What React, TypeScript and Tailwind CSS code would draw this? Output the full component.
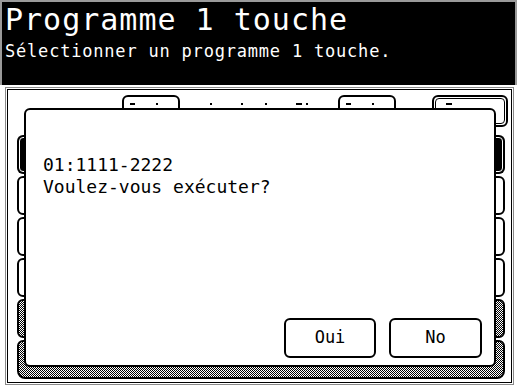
const mono = { fontFamily: '"DejaVu Sans Mono", "Liberation Mono", monospace' };

const hatch =
  "bg-[repeating-conic-gradient(#000_0%_25%,#fff_0%_50%)] bg-[length:2px_2px]";

// tops of the labels hidden behind the dialog
const marks = [
  { x: 122, w: 5 },
  { x: 148, w: 2 },
  { x: 202, w: 2 },
  { x: 233, w: 2 },
  { x: 257, w: 2 },
  { x: 288, w: 6 },
  { x: 298, w: 2 },
  { x: 338, w: 5 },
  { x: 364, w: 2 },
  { x: 438, w: 6 },
];

const Row = ({ kind, last }: { kind: "on" | "off" | "hatch"; last?: boolean }) => {
  if (kind === "on") {
    return (
      <div className="h-[39px] rounded-[6px] bg-black p-[2px]">
        <div className="h-full rounded-[4px] border border-white" />
      </div>
    );
  }
  if (kind === "hatch") {
    return (
      <div
        className={`h-[39px] rounded-[6px] border-2 border-black ${hatch} ${
          last ? "rounded-b-[8px]" : ""
        }`}
      />
    );
  }
  return <div className="h-[39px] rounded-[6px] border-2 border-black bg-white" />;
};

export default function App() {
  return (
    <div className="w-[517px] h-[390px] bg-white overflow-hidden" style={mono}>
      <div className="h-[85px] bg-black border-2 border-b-0 border-[#9a9a9a] px-[3px] pt-[2px] text-white">
        <div className="text-[30px] leading-[32px] tracking-[1px] whitespace-nowrap">
          Programme 1 touche
        </div>
        <div className="mt-[5px] text-[17px] leading-[20px] tracking-[0.8px] whitespace-nowrap">
          Sélectionner un programme 1 touche.
        </div>
      </div>

      <div className="mt-[2px] ml-[5px] w-[509px] h-[298px] border border-[#8a8a8a] p-px">
        <div className="relative h-full border border-black">
          {/* top bar */}
          <div className="flex pt-[5px]">
            <div className="ml-[114px] w-[58px] h-[32px] rounded-[6px] border-2 border-black" />
            <div className="ml-[158px] w-[58px] h-[32px] rounded-[6px] border-2 border-black" />
            <div className="ml-[36px] w-[76px] h-[32px] rounded-[6px] border-2 border-black p-px">
              <div className="h-full rounded-[4px] border border-black" />
            </div>
          </div>
          {marks.map((m, i) => (
            <div
              key={i}
              className="absolute top-[13px] h-[2px] bg-black"
              style={{ left: m.x, width: m.w }}
            />
          ))}

          {/* list rows */}
          <div className="mt-[8px] ml-[9px] w-[488px] flex flex-col gap-[2px]">
            <Row kind="on" />
            <Row kind="off" />
            <Row kind="off" />
            <Row kind="off" />
            <Row kind="hatch" />
            <Row kind="hatch" last />
          </div>

          {/* dialog */}
          <div className="absolute left-[16px] top-[18px] w-[472px] h-[259px] rounded-[6px] border-2 border-black bg-white flex flex-col">
            <div className="pl-[17px] pt-[44px] text-[18px] leading-[22px] text-black">
              <div>01:1111-2222</div>
              <div>Voulez-vous exécuter?</div>
            </div>
            <div className="mt-auto flex justify-end gap-[13px] pr-[12px] pb-[7px]">
              <button className="w-[92px] h-[40px] rounded-[6px] border-2 border-black bg-white text-[17px] text-black">
                Oui
              </button>
              <button className="w-[93px] h-[40px] rounded-[6px] border-2 border-black bg-white text-[17px] text-black">
                No
              </button>
            </div>
          </div>
        </div>
      </div>
    </div>
  );
}
